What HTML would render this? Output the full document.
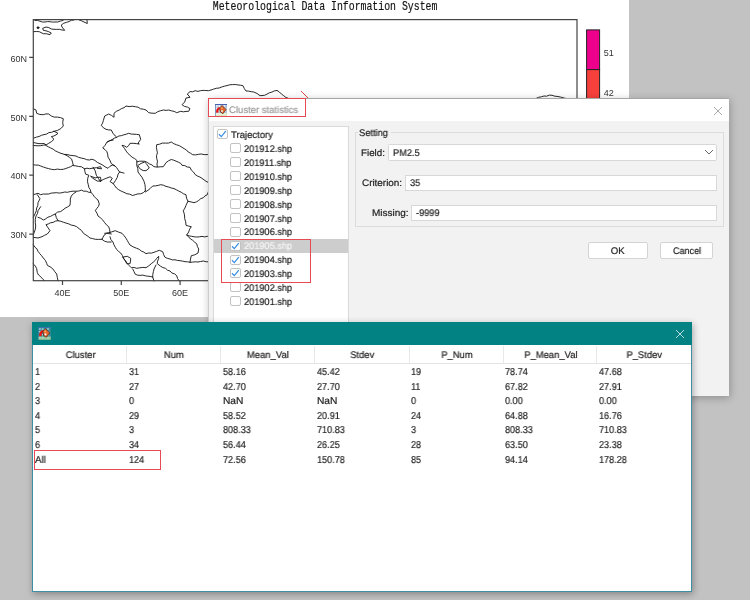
<!DOCTYPE html>
<html><head><meta charset="utf-8">
<style>
*{margin:0;padding:0;box-sizing:border-box}
html,body{width:750px;height:600px;overflow:hidden;background:#c2c2c2;font-family:"Liberation Sans",sans-serif}
.abs{position:absolute}
#mapwin{position:absolute;left:0;top:0;width:629px;height:317px;background:#fff;overflow:hidden}
.t{position:absolute;white-space:nowrap;line-height:1;will-change:transform;text-rendering:geometricPrecision;-webkit-text-stroke:0.2px currentColor}
</style></head><body>
<div id="mapwin">
<svg width="629" height="318" style="position:absolute;left:0;top:0;will-change:transform">
<g fill="none" stroke="#111" stroke-width="0.9" stroke-linejoin="round" stroke-linecap="round">
<path d="M33.3,31.7 L36.3,31.5 L39.3,31.7 L43.3,33.7 L46.7,33.8 L50.0,34.7 L51.3,33.0 L48.7,31.7 L46.0,30.8 L43.3,30.3 L42.7,28.3 L46.0,27.0 L48.8,27.6 L51.3,29.0 L54.0,29.3 L56.7,29.4 L59.4,29.3 L62.0,30.0 L64.7,30.3 L62.0,27.0 L61.3,25.0 L63.8,23.2 L66.7,22.3 L69.1,21.5 L71.4,20.3 L74.0,20.0"/>
<path d="M35.0,20.5 L37.6,20.4 L40.0,21.2 L42.4,22.0 L45.0,22.0 L47.5,21.6 L50.0,21.7 L52.5,22.1 L55.0,22.0 L57.8,22.0 L60.3,21.1 L63.0,20.5"/>
<path d="M79.3,20.0 L81.7,20.9 L84.0,22.0 L87.3,23.5 L87.0,20.0"/>
<path d="M33.3,108.7 L36.0,110.0 L36.7,113.3 L39.9,114.5 L43.3,114.7 L45.9,113.9 L48.7,114.0 L51.3,116.0 L54.2,117.1 L57.4,117.1 L60.4,117.6 L63.3,118.7 L62.7,122.7 L63.3,126.0 L60.7,128.7 L57.5,130.4 L54.0,131.3 L51.6,132.3 L48.9,132.6 L46.6,134.1 L44.0,134.6 L41.5,135.3 L39.0,136.5 L36.5,137.1 L34.0,138.0"/>
<path d="M54.0,131.3 L58.0,133.3 L56.0,134.9 L53.8,136.0 L51.3,136.7 L54.0,139.3 L51.5,141.6 L48.7,143.3 L46.0,145.0"/>
<path d="M33.3,142.5 L38.0,143.5 L41.0,143.7 L44.0,143.5 L46.0,144.8 L43.3,145.2 L40.7,145.7 L38.0,145.8 L33.3,145.5"/>
<path d="M46.0,145.5 L48.3,146.8 L50.7,148.0 L53.1,149.1 L55.2,150.8 L57.6,151.9 L60.0,153.0 L64.3,154.4 L67.3,154.5 L70.1,155.3 L73.1,155.6 L76.0,156.0 L78.5,157.3 L81.3,158.1 L84.1,158.6 L86.7,159.7 L89.4,160.0 L92.0,159.2 L94.9,160.4 L97.3,162.4 L100.0,163.7 L102.7,165.1 L105.2,166.9 L108.0,168.3 L109.9,166.4 L112.3,165.1 L114.4,165.6"/>
<path d="M33.3,164.7 L35.8,165.1 L38.3,165.1 L40.7,166.0 L43.3,167.0 L45.9,167.9 L48.6,168.6 L51.3,169.3 L54.3,169.7 L57.3,169.1 L60.3,169.5 L63.3,169.3 L65.8,168.5 L68.3,167.6 L70.7,166.7 L73.3,165.1 L72.5,162.2 L71.7,159.2 L69.4,157.3 L67.0,155.6 L64.3,154.4"/>
<path d="M73.3,165.6 L76.0,165.9 L78.6,166.5 L81.3,166.7 L84.5,168.8 L87.0,168.2 L89.5,168.7 L92.0,168.3 L96.3,167.7 L100.5,166.7 L101.6,168.8 L97.3,168.3"/>
<path d="M84.5,168.8 L84.9,171.5 L85.6,174.1 L88.8,175.2 L87.7,178.4 L87.5,181.7 L88.3,184.8 L88.8,187.4 L90.3,189.7 L90.9,192.3 L92.8,194.4 L94.4,196.7 L96.3,198.7 L98.0,200.0 L99.3,204.0 L98.4,206.5 L96.7,208.5 L95.3,210.7 L97.0,213.2 L98.0,216.0 L100.5,217.9 L102.8,220.1 L104.7,222.7 L106.5,224.9 L108.7,226.7 L109.7,229.8 L110.0,233.0"/>
<path d="M93.1,167.2 L95.2,170.9 L96.3,175.2 L98.4,178.4 L100.5,181.6"/>
<path d="M90.9,176.3 L95.2,177.9 L97.8,177.3 L100.5,177.3 L101.1,181.1 L97.3,181.1 L93.1,178.4 Z"/>
<path d="M100.5,181.1 L103.1,179.6 L105.9,178.4 L110.1,176.8 L112.3,178.4 L110.1,181.6 L113.3,183.7 L115.5,180.5 L117.2,177.5 L118.1,174.1 L119.7,172.0"/>
<path d="M114.4,165.6 L116.5,167.4 L118.0,169.8 L119.7,172.0 L124.0,173.1"/>
<path d="M113.3,183.7 L114.9,185.9 L116.5,188.0 L118.8,189.8 L121.3,191.2 L124.0,192.3 L126.7,193.7 L129.8,194.2 L132.5,195.5 L135.2,194.7 L137.9,193.9 L140.7,193.8 L143.3,192.7 L145.3,190.7"/>
<path d="M113.3,140.0 L109.9,140.6 L106.9,142.1 L105.1,145.3 L102.7,148.0 L105.0,149.6 L106.9,151.7 L107.7,154.3 L108.0,157.1 L109.9,160.2 L111.2,163.5 L114.4,165.6"/>
<path d="M107.3,142.0 L109.6,140.8 L112.0,139.7 L114.2,138.2 L116.7,137.3 L118.9,136.0 L121.5,135.6 L123.9,134.8 L126.3,134.2 L128.7,133.3 L131.3,134.1 L134.0,134.2 L136.6,134.4 L139.3,134.7 L140.7,139.3 L138.0,143.3 L139.3,144.0 L136.2,143.6 L133.1,143.3 L130.0,143.3 L128.7,145.6 L126.7,147.3 L124.5,145.9 L122.0,145.3 L124.7,148.7 L126.2,151.1 L127.9,153.4 L130.0,155.3 L132.1,157.2 L134.6,158.5 L136.8,160.3 L136.9,162.8 L136.7,165.3 L137.8,168.6 L138.0,172.0 L139.9,174.7 L142.0,177.3 L144.0,181.3 L144.9,184.4 L145.3,187.5 L145.3,190.7"/>
<path d="M138.0,165.3 L141.2,163.4 L144.7,162.0 L146.5,163.8 L147.9,165.9 L149.3,168.0 L146.0,170.7 L143.2,170.5 L140.7,169.3 Z"/>
<path d="M136.8,162.0 L139.4,161.2 L142.0,161.2 L144.7,161.3 L147.2,162.3 L149.4,163.9 L151.9,164.9 L154.0,166.7 L157.1,167.1 L160.2,166.8 L163.3,166.7 L166.0,162.7 L168.5,160.8 L171.3,159.5 L173.8,160.2 L176.1,161.2 L178.4,162.2 L180.7,163.3 L182.0,165.3 L184.8,165.6 L187.2,167.0 L190.0,167.3 L191.3,170.1 L193.6,172.2 L195.3,174.7 L197.4,176.0 L199.8,177.0 L201.9,178.3 L204.0,179.8 L206.0,181.3 L210.0,183.3"/>
<path d="M157.3,166.7 L157.0,164.0 L157.5,161.2 L156.7,158.5 L156.5,155.7 L157.4,152.9 L156.9,150.2 L156.4,147.5 L156.7,144.7 L159.6,144.2 L162.4,143.1 L165.5,143.1 L168.5,143.1 L171.3,142.0 L173.8,143.7 L176.6,144.8 L179.4,145.7 L182.0,147.3 L184.2,148.7 L186.5,150.0 L188.2,152.0 L190.5,153.2 L192.7,154.7 L195.6,154.9 L198.5,154.3 L201.3,154.0 L204.2,154.6 L207.1,154.6 L210.0,154.0"/>
<path d="M145.3,192.0 L148.0,190.3 L150.4,188.3 L152.7,186.0 L155.4,185.9 L158.1,185.4 L160.7,184.7 L163.4,185.2 L166.0,186.4 L168.7,187.0 L171.3,188.0 L174.0,188.6 L176.4,189.8 L178.8,191.1 L181.2,192.2 L183.5,193.8 L186.0,194.7 L186.5,198.1 L188.0,201.3 L191.0,201.9 L194.0,202.7 L196.5,201.8 L198.7,200.5 L200.7,198.7 L203.2,197.8 L205.0,195.9 L207.3,194.7 L208.7,190.7"/>
<path d="M188.0,201.3 L186.0,205.3 L184.9,208.1 L183.3,210.7 L184.1,213.3 L184.6,216.0 L184.7,218.7 L185.7,221.9 L186.0,225.3 L188.6,226.1 L191.3,226.7 L189.6,229.2 L188.7,232.0 L186.7,235.0 L188.7,237.0 L190.5,239.0 L192.7,240.3 L194.6,242.2 L196.7,243.7 L197.4,246.5 L198.7,249.0 L198.0,253.0 L194.8,254.8 L191.3,255.7 L190.5,259.0 L190.0,262.3"/>
<path d="M186.7,235.0 L189.1,235.9 L191.6,236.3 L194.1,236.8 L196.7,237.0 L199.4,236.8 L202.0,236.4 L204.7,236.9 L207.3,236.3 L210.0,236.3"/>
<path d="M33.3,194.7 L38.0,193.3 L40.7,194.7 L43.3,194.0 L46.0,194.1 L48.7,194.0 L51.3,193.1 L54.0,192.9 L56.7,192.7 L59.4,193.1 L62.1,192.7 L64.8,192.0 L67.5,192.3 L70.3,191.5 L73.1,191.2 L76.0,191.2 L78.7,191.1 L81.3,190.1 L83.7,191.2 L86.4,191.2 L88.8,192.3 L90.9,192.3"/>
<path d="M76.0,192.0 L73.4,193.7 L71.3,196.0 L70.3,199.0 L70.3,202.2 L70.0,205.3 L67.6,206.9 L65.1,208.2 L62.9,210.0 L60.5,211.6 L57.5,212.1 L55.3,214.0 L52.8,215.1 L50.5,216.4 L47.9,217.2 L45.7,218.9 L43.3,220.0 L40.8,218.3 L38.0,217.3"/>
<path d="M55.3,214.0 L56.3,217.5 L58.0,220.7 L60.8,221.3 L63.4,222.2 L66.1,223.1 L68.8,223.9 L71.3,225.1 L74.1,225.6 L76.7,226.7 L79.1,228.7 L81.6,230.5 L83.4,233.3 L86.0,235.0 L88.1,236.4 L90.0,238.0 L92.7,238.6 L95.3,239.3 L98.7,239.4 L102.0,239.3 L104.0,235.3 L106.7,233.3 L111.3,234.0"/>
<path d="M58.0,220.7 L55.5,221.1 L53.2,222.4 L50.7,222.7 L48.4,223.9 L46.0,224.7 L48.0,227.7 L50.0,230.7 L47.3,234.0 L44.6,235.3 L42.0,236.7 L38.0,238.0 L33.3,237.3"/>
<path d="M37.3,194.7 L40.0,198.7 L38.0,202.7 L37.8,205.5 L36.7,208.0 L36.3,210.7 L35.3,213.3 L33.3,217.3"/>
<path d="M40.7,206.7 L38.0,210.7 L37.5,213.5 L36.0,216.0 L35.3,219.3 L35.3,222.7 L35.7,226.0 L35.3,229.3 L34.3,232.2 L33.3,235.0"/>
<path d="M104.7,233.3 L108.0,232.9 L111.3,232.0 L115.3,230.7 L118.6,232.1 L122.0,233.3 L124.1,235.7 L126.0,238.3 L127.3,240.5 L128.6,242.8 L130.0,245.0 L133.2,246.9 L136.7,248.3 L139.2,249.3 L141.3,251.1 L143.8,252.1 L146.0,253.7 L148.6,253.0 L151.4,253.1 L154.0,252.3 L156.7,251.3 L159.3,250.3 L162.7,251.7 L163.6,254.4 L164.7,257.0 L167.2,258.3 L170.0,259.0 L172.4,259.9 L175.0,259.8 L177.5,260.4 L180.0,260.7 L182.5,261.1 L185.0,261.7 L187.5,261.8 L190.0,262.3 L192.7,262.1 L195.3,261.8 L198.0,262.0 L200.7,261.5 L203.3,261.0 L206.6,261.8 L210.0,261.7"/>
<path d="M110.0,236.7 L110.9,239.6 L112.9,241.9 L113.9,244.7 L115.3,247.3 L116.7,249.5 L118.6,251.4 L120.7,253.0 L122.4,255.5 L123.3,258.3 L125.6,260.8 L127.3,263.7 L129.3,265.7 L131.3,267.7 L134.1,267.5 L136.7,268.3 L139.8,267.8 L142.9,267.4 L146.0,267.7 L148.8,265.8 L151.3,263.7 L153.3,262.1 L155.2,260.4 L156.7,258.3 L158.7,256.3 L158.6,258.8 L157.5,261.2 L157.3,263.7 L160.7,266.3 L162.9,267.6 L165.5,268.3 L167.5,270.2 L170.0,271.0 L171.9,273.0 L174.6,273.9 L176.7,275.7 L177.6,278.6 L179.3,281.0"/>
<path d="M123.3,257.0 L127.3,256.3 L130.7,258.3 L130.5,261.0 L130.0,263.7 L127.3,263.7 Z"/>
<path d="M132.7,269.0 L134.0,271.6 L135.3,274.3 L137.7,275.2 L140.2,275.4 L142.8,275.1 L145.3,275.8 L147.7,276.2 L150.2,276.4 L152.7,277.0 L154.0,281.0"/>
<path d="M152.7,277.0 L152.8,274.3 L153.4,271.6 L154.0,269.0 L156.0,265.0"/>
<path d="M33.3,244.7 L34.7,247.0 L36.9,248.8 L38.0,251.3 L39.7,253.6 L41.6,255.7 L43.3,258.0 L45.4,260.4 L46.7,263.3 L47.3,265.3 L50.1,266.8 L52.7,268.7 L54.6,271.4 L56.7,274.0 L57.3,277.4 L58.0,280.7"/>
<path d="M33.3,264.0 L35.4,266.1 L36.7,268.7 L37.3,272.7 L38.6,275.0 L40.7,276.7 L42.5,278.9 L44.7,280.7"/>
<path d="M102.0,239.3 L104.4,241.1 L107.3,242.0 L111.3,242.0"/>
<path d="M116.7,137.3 L115.3,136.0 L112.9,133.2 L111.3,130.0 L108.6,129.9 L106.0,129.3 L103.3,127.7 L101.3,125.3 L102.6,123.1 L103.3,120.7 L104.7,116.0 L108.7,114.0 L111.5,115.4 L114.0,117.3 L114.0,113.3 L116.4,111.3 L119.3,110.0 L121.5,108.6 L124.0,107.7 L126.0,106.0 L129.1,106.6 L132.2,106.2 L135.3,106.7 L138.1,107.2 L140.5,108.8 L143.3,109.2 L146.0,110.0 L148.7,112.7 L152.0,113.2 L155.3,113.3 L157.8,111.6 L160.7,110.7 L163.3,110.0 L166.1,110.4 L168.7,110.0 L171.4,110.8 L174.2,111.4 L176.7,112.7 L180.7,111.3 L183.4,111.8 L186.0,111.4 L188.7,111.3 L190.0,108.7 L187.5,107.1 L184.5,106.4 L182.0,104.7 L184.7,102.0 L186.0,98.0 L190.0,97.3 L187.3,94.0 L190.0,91.6 L192.7,91.8 L195.2,90.7 L197.9,91.4 L200.5,90.7 L203.1,90.4 L205.8,90.5 L208.4,90.7 L211.0,90.0 L213.6,89.1 L216.3,88.3 L219.1,88.0 L221.7,87.0 L224.3,86.2 L227.0,85.6 L229.7,84.8 L232.5,84.6 L235.2,84.5 L237.8,84.9 L240.4,85.2 L243.0,85.7 L244.3,88.5 L246.0,91.0 L248.6,91.1 L251.2,91.7 L253.8,92.0 L257.1,93.5 L260.0,95.7 L264.5,95.3 L266.9,94.2 L269.3,92.8 L271.9,92.1 L274.3,90.9 L277.0,90.4 L279.4,92.0 L281.4,94.0 L283.6,95.6 L285.8,97.4 L290.0,99.0"/>
<path d="M536.0,98.5 L538.6,97.3 L541.3,96.8 L544.0,96.0 L546.7,96.2 L549.3,95.1 L552.0,95.3 L554.9,96.2 L558.0,96.5 L560.7,97.1 L563.3,97.8 L565.9,98.5"/>
<circle cx="38" cy="27.7" r="0.9" fill="#111"/>
</g>
<path d="M301,91 L308,98" stroke="#e04848" stroke-width="1" fill="none"/>
<g stroke="#444" stroke-width="1.2" fill="none">
<rect x="33.3" y="19.6" width="543.7" height="261.1"/>
<path d="M29.2,57.4 H33.3 M29.2,116.3 H33.3 M29.2,175.2 H33.3 M29.2,234.1 H33.3 M62.5,280.7 V285 M121.3,280.7 V285 M180.1,280.7 V285"/>
</g>
<rect x="586.6" y="29.9" width="13" height="39.7" fill="#ec008c" stroke="#222" stroke-width="1"/>
<rect x="586.6" y="69.6" width="13" height="40" fill="#f6403c" stroke="#222" stroke-width="1"/>
<g font-family="Liberation Sans" font-size="9" fill="#333">
<text x="27" y="61.6" text-anchor="end">60N</text>
<text x="27" y="120.5" text-anchor="end">50N</text>
<text x="27" y="179.4" text-anchor="end">40N</text>
<text x="27" y="238.3" text-anchor="end">30N</text>
<text x="62.5" y="296" text-anchor="middle">40E</text>
<text x="121.3" y="296" text-anchor="middle">50E</text>
<text x="180.1" y="296" text-anchor="middle">60E</text>
<text x="603.7" y="56">51</text>
<text x="603.7" y="96.3">42</text>
</g>
<text transform="translate(212.8,9.8) scale(0.896,1.18)" font-family="Liberation Mono" font-size="11" fill="#111" stroke="#111" stroke-width="0.15">Meteorological Data Information System</text>
</svg>

</div>
<div class="abs" style="left:208.00px;top:98.00px;width:521.00px;height:298.00px;background:#f2f2f2;box-shadow:1px 2px 8px rgba(0,0,0,0.26);"></div>
<div class="abs" style="left:208.00px;top:98.00px;width:1.00px;height:298.00px;background:#cdcdcd"></div>
<div class="abs" style="left:208.00px;top:98.00px;width:521.00px;height:1.00px;background:#a6a6a6"></div>
<div class="abs" style="left:209.00px;top:99.00px;width:520.00px;height:22.00px;background:#fff"></div>
<svg class="abs" style="left:215.00px;top:104.00px" width="12" height="12" viewBox="0 0 12 12"><rect x="0" y="0" width="12" height="12" fill="#b4c2d6"/>
<path d="M0,9H12V12H0Z" fill="#dfe8c0"/>
<g fill="#f4f6fa"><rect x="1" y="1.2" width="1.6" height="1.4"/><rect x="3.6" y="1.2" width="1.6" height="1.4"/><rect x="8.6" y="1.2" width="1.6" height="1.4"/><rect x="1" y="3.8" width="1.6" height="1.4"/><rect x="8.6" y="3.8" width="1.6" height="1.4"/><rect x="1" y="9.4" width="1.6" height="1.4"/><rect x="3.6" y="9.4" width="1.6" height="1.4"/><rect x="6.2" y="9.4" width="1.6" height="1.4"/><rect x="8.6" y="9.4" width="1.6" height="1.4"/><rect x="3.6" y="6.6" width="1.6" height="1.4"/><rect x="8.6" y="6.6" width="1.6" height="1.4"/></g>
<path d="M0,0.4H12" stroke="#2a48a8" stroke-width="0.9"/>
<path d="M0.4,0V12" stroke="#4a68b0" stroke-width="0.6"/>
<path d="M4.6,3 C2,3.4 0.8,6 1.2,8.8 L3.4,8.4 C3.2,6.4 3.8,5 5,4.4 Z" fill="#f01010"/>
<path d="M4.6,4 L7.2,1.6 L11,5.6 L7.8,9.8 L5.2,7.6 Z" fill="#e8642a" stroke="#5a2a10" stroke-width="0.7" stroke-linejoin="round"/>
<path d="M5.6,3.8 L7.2,2.8 L8,4.8 L6.4,5.6 Z" fill="#f49a50"/>
<circle cx="7" cy="7" r="1" fill="#f0f0f0"/>
<path d="M5,7.4 L6,8.4" stroke="#222" stroke-width="0.8"/></svg>
<div class="t" style="left:229.40px;top:106.00px;font-size:9.60px;color:#9c9c9c;transform:scaleX(0.990);transform-origin:0 0;">Cluster statistics</div>
<svg class="abs" style="left:712.00px;top:105.00px" width="12" height="12" viewBox="0 0 12 12"><path d="M2,2 L10,10 M10,2 L2,10" stroke="#a0a0a0" stroke-width="0.9"/></svg>
<div class="abs" style="left:213.00px;top:126.00px;width:136.00px;height:215.00px;background:#fff;border:1px solid #d9d9d9"></div>
<div class="abs" style="left:214.00px;top:239.40px;width:134.00px;height:13.40px;background:#cdcdcd"></div>
<div class="abs" style="left:217.00px;top:129.30px;width:10.50px;height:10.00px;border:1px solid #c2c2c2;border-radius:2px;background:#fff"></div>
<svg class="abs" style="left:217.00px;top:129.30px" width="11" height="10" viewBox="0 0 11 10"><path d="M2,5.2 L4.3,7.6 L8.8,2.2" stroke="#3b8fe6" stroke-width="1.3" fill="none"/></svg>
<div class="t" style="left:231.00px;top:131.00px;font-size:9.60px;color:#222;transform:scaleX(0.990);transform-origin:0 0;">Trajectory</div>
<div class="abs" style="left:230.20px;top:143.30px;width:10.50px;height:10.00px;border:1px solid #c2c2c2;border-radius:2px;background:#fff"></div>
<div class="t" style="left:243.80px;top:145.00px;font-size:9.60px;color:#222;transform:scaleX(0.960);transform-origin:0 0;">201912.shp</div>
<div class="abs" style="left:230.20px;top:157.20px;width:10.50px;height:10.00px;border:1px solid #c2c2c2;border-radius:2px;background:#fff"></div>
<div class="t" style="left:243.80px;top:158.90px;font-size:9.60px;color:#222;transform:scaleX(0.960);transform-origin:0 0;">201911.shp</div>
<div class="abs" style="left:230.20px;top:171.10px;width:10.50px;height:10.00px;border:1px solid #c2c2c2;border-radius:2px;background:#fff"></div>
<div class="t" style="left:243.80px;top:172.80px;font-size:9.60px;color:#222;transform:scaleX(0.960);transform-origin:0 0;">201910.shp</div>
<div class="abs" style="left:230.20px;top:185.00px;width:10.50px;height:10.00px;border:1px solid #c2c2c2;border-radius:2px;background:#fff"></div>
<div class="t" style="left:243.80px;top:186.70px;font-size:9.60px;color:#222;transform:scaleX(0.960);transform-origin:0 0;">201909.shp</div>
<div class="abs" style="left:230.20px;top:198.90px;width:10.50px;height:10.00px;border:1px solid #c2c2c2;border-radius:2px;background:#fff"></div>
<div class="t" style="left:243.80px;top:200.60px;font-size:9.60px;color:#222;transform:scaleX(0.960);transform-origin:0 0;">201908.shp</div>
<div class="abs" style="left:230.20px;top:212.80px;width:10.50px;height:10.00px;border:1px solid #c2c2c2;border-radius:2px;background:#fff"></div>
<div class="t" style="left:243.80px;top:214.50px;font-size:9.60px;color:#222;transform:scaleX(0.960);transform-origin:0 0;">201907.shp</div>
<div class="abs" style="left:230.20px;top:226.70px;width:10.50px;height:10.00px;border:1px solid #c2c2c2;border-radius:2px;background:#fff"></div>
<div class="t" style="left:243.80px;top:228.40px;font-size:9.60px;color:#222;transform:scaleX(0.960);transform-origin:0 0;">201906.shp</div>
<div class="abs" style="left:230.20px;top:240.60px;width:10.50px;height:10.00px;border:1px solid #c2c2c2;border-radius:2px;background:#fff"></div>
<svg class="abs" style="left:230.20px;top:240.60px" width="11" height="10" viewBox="0 0 11 10"><path d="M2,5.2 L4.3,7.6 L8.8,2.2" stroke="#3b8fe6" stroke-width="1.3" fill="none"/></svg>
<div class="t" style="left:243.80px;top:242.30px;font-size:9.60px;color:#f4f4f4;transform:scaleX(0.960);transform-origin:0 0;">201905.shp</div>
<div class="abs" style="left:230.20px;top:254.50px;width:10.50px;height:10.00px;border:1px solid #c2c2c2;border-radius:2px;background:#fff"></div>
<svg class="abs" style="left:230.20px;top:254.50px" width="11" height="10" viewBox="0 0 11 10"><path d="M2,5.2 L4.3,7.6 L8.8,2.2" stroke="#3b8fe6" stroke-width="1.3" fill="none"/></svg>
<div class="t" style="left:243.80px;top:256.20px;font-size:9.60px;color:#222;transform:scaleX(0.960);transform-origin:0 0;">201904.shp</div>
<div class="abs" style="left:230.20px;top:268.40px;width:10.50px;height:10.00px;border:1px solid #c2c2c2;border-radius:2px;background:#fff"></div>
<svg class="abs" style="left:230.20px;top:268.40px" width="11" height="10" viewBox="0 0 11 10"><path d="M2,5.2 L4.3,7.6 L8.8,2.2" stroke="#3b8fe6" stroke-width="1.3" fill="none"/></svg>
<div class="t" style="left:243.80px;top:270.10px;font-size:9.60px;color:#222;transform:scaleX(0.960);transform-origin:0 0;">201903.shp</div>
<div class="abs" style="left:230.20px;top:282.30px;width:10.50px;height:10.00px;border:1px solid #c2c2c2;border-radius:2px;background:#fff"></div>
<div class="t" style="left:243.80px;top:284.00px;font-size:9.60px;color:#222;transform:scaleX(0.960);transform-origin:0 0;">201902.shp</div>
<div class="abs" style="left:230.20px;top:296.20px;width:10.50px;height:10.00px;border:1px solid #c2c2c2;border-radius:2px;background:#fff"></div>
<div class="t" style="left:243.80px;top:297.90px;font-size:9.60px;color:#222;transform:scaleX(0.960);transform-origin:0 0;">201901.shp</div>
<div class="abs" style="left:355.00px;top:132.00px;width:369.00px;height:95.00px;border:1px solid #dcdcdc"></div>
<div class="abs" style="left:358.00px;top:128.00px;width:33.00px;height:8.00px;background:#f2f2f2"></div>
<div class="t" style="left:358.80px;top:129.00px;font-size:9.60px;color:#222;transform:scaleX(0.970);transform-origin:0 0;">Setting</div>
<div class="t" style="left:361.30px;top:148.60px;font-size:9.60px;color:#222;transform:scaleX(1.020);transform-origin:0 0;">Field:</div>
<div class="abs" style="left:388.00px;top:144.00px;width:328.50px;height:16.50px;background:#fff;border:1px solid #d8d8d8;border-radius:1.5px"></div>
<div class="t" style="left:393.30px;top:148.60px;font-size:9.60px;color:#222;transform:scaleX(0.960);transform-origin:0 0;">PM2.5</div>
<svg class="abs" style="left:704.00px;top:148.00px" width="10" height="8" viewBox="0 0 10 8"><path d="M1,2 L5,6 L9,2" stroke="#555" stroke-width="0.9" fill="none"/></svg>
<div class="t" style="left:361.60px;top:178.90px;font-size:9.60px;color:#222;transform:scaleX(1.030);transform-origin:0 0;">Criterion:</div>
<div class="abs" style="left:405.00px;top:174.50px;width:311.50px;height:16.30px;background:#fff;border:1px solid #d8d8d8"></div>
<div class="t" style="left:410.00px;top:178.90px;font-size:9.60px;color:#222;transform:scaleX(0.960);transform-origin:0 0;">35</div>
<div class="t" style="left:371.50px;top:208.70px;font-size:9.60px;color:#222;transform:scaleX(1.040);transform-origin:0 0;">Missing:</div>
<div class="abs" style="left:411.00px;top:204.50px;width:305.50px;height:16.30px;background:#fff;border:1px solid #d8d8d8"></div>
<div class="t" style="left:416.20px;top:208.70px;font-size:9.60px;color:#222;transform:scaleX(0.960);transform-origin:0 0;">-9999</div>
<div class="abs" style="left:588.00px;top:242.40px;width:59.60px;height:17.00px;background:#fff;border:1px solid #d4d4d4;border-radius:2px"></div>
<div class="t" style="left:588.00px;top:247.20px;font-size:9.60px;color:#222;width:59.6px;text-align:center;">OK</div>
<div class="abs" style="left:660.40px;top:242.40px;width:52.60px;height:17.00px;background:#fff;border:1px solid #d4d4d4;border-radius:2px"></div>
<div class="t" style="left:673.20px;top:247.20px;font-size:9.60px;color:#222;transform:scaleX(0.940);transform-origin:0 0;">Cancel</div>
<div class="abs" style="left:208.30px;top:98.30px;width:97.30px;height:18.50px;border:1.4px solid #e64a55"></div>
<div class="abs" style="left:221.00px;top:239.20px;width:89.60px;height:43.40px;border:1.3px solid #e64a55"></div>
<div class="abs" style="left:32.00px;top:322.00px;width:660.00px;height:270.00px;background:#fff;border:1px solid #3f8fa2;box-shadow:1px 2px 7px rgba(0,0,0,0.32)"></div>
<div class="abs" style="left:32.00px;top:322.00px;width:660.00px;height:23.40px;background:#038284"></div>
<svg class="abs" style="left:38.00px;top:327.00px" width="13" height="13" viewBox="0 0 13 13"><g transform="scale(1.06)"><rect x="0" y="0" width="12" height="12" fill="#3e8a9a"/>
<path d="M0,9H12V12H0Z" fill="#9cc890"/>
<g fill="#a8d4d0"><rect x="1" y="1.2" width="1.6" height="1.4"/><rect x="3.6" y="1.2" width="1.6" height="1.4"/><rect x="8.6" y="1.2" width="1.6" height="1.4"/><rect x="1" y="3.8" width="1.6" height="1.4"/><rect x="8.6" y="3.8" width="1.6" height="1.4"/><rect x="1" y="9.4" width="1.6" height="1.4"/><rect x="3.6" y="9.4" width="1.6" height="1.4"/><rect x="6.2" y="9.4" width="1.6" height="1.4"/><rect x="8.6" y="9.4" width="1.6" height="1.4"/><rect x="3.6" y="6.6" width="1.6" height="1.4"/><rect x="8.6" y="6.6" width="1.6" height="1.4"/></g>
<path d="M0,0.4H12" stroke="#3a6cb0" stroke-width="0.9"/>
<path d="M0.4,0V12" stroke="#3a78a0" stroke-width="0.6"/>
<path d="M4.6,3 C2,3.4 0.8,6 1.2,8.8 L3.4,8.4 C3.2,6.4 3.8,5 5,4.4 Z" fill="#f01010"/>
<path d="M4.6,4 L7.2,1.6 L11,5.6 L7.8,9.8 L5.2,7.6 Z" fill="#e8642a" stroke="#5a2a10" stroke-width="0.7" stroke-linejoin="round"/>
<path d="M5.6,3.8 L7.2,2.8 L8,4.8 L6.4,5.6 Z" fill="#f49a50"/>
<circle cx="7" cy="7" r="1" fill="#f0f0f0"/>
<path d="M5,7.4 L6,8.4" stroke="#222" stroke-width="0.8"/></g></svg>
<svg class="abs" style="left:674.00px;top:328.00px" width="12" height="12" viewBox="0 0 12 12"><path d="M2,2 L10,10 M10,2 L2,10" stroke="#cfe6e6" stroke-width="0.9"/></svg>
<div class="abs" style="left:33.00px;top:363.00px;width:658.00px;height:1.00px;background:#e4e4e4"></div>
<div class="abs" style="left:126.40px;top:345.50px;width:1.00px;height:17.50px;background:#e8e8e8"></div>
<div class="abs" style="left:220.40px;top:345.50px;width:1.00px;height:17.50px;background:#e8e8e8"></div>
<div class="abs" style="left:314.20px;top:345.50px;width:1.00px;height:17.50px;background:#e8e8e8"></div>
<div class="abs" style="left:408.60px;top:345.50px;width:1.00px;height:17.50px;background:#e8e8e8"></div>
<div class="abs" style="left:502.60px;top:345.50px;width:1.00px;height:17.50px;background:#e8e8e8"></div>
<div class="abs" style="left:596.40px;top:345.50px;width:1.00px;height:17.50px;background:#e8e8e8"></div>
<div class="t" style="left:34.00px;top:351.40px;font-size:9.60px;color:#222;transform:scaleX(0.985);transform-origin:0 0;width:94.82px;text-align:center;">Cluster</div>
<div class="t" style="left:127.40px;top:351.40px;font-size:9.60px;color:#222;transform:scaleX(0.985);transform-origin:0 0;width:95.43px;text-align:center;">Num</div>
<div class="t" style="left:221.40px;top:351.40px;font-size:9.60px;color:#222;transform:scaleX(0.985);transform-origin:0 0;width:95.23px;text-align:center;">Mean_Val</div>
<div class="t" style="left:315.20px;top:351.40px;font-size:9.60px;color:#222;transform:scaleX(0.985);transform-origin:0 0;width:95.84px;text-align:center;">Stdev</div>
<div class="t" style="left:409.60px;top:351.40px;font-size:9.60px;color:#222;transform:scaleX(0.985);transform-origin:0 0;width:95.43px;text-align:center;">P_Num</div>
<div class="t" style="left:503.60px;top:351.40px;font-size:9.60px;color:#222;transform:scaleX(0.985);transform-origin:0 0;width:95.23px;text-align:center;">P_Mean_Val</div>
<div class="t" style="left:597.40px;top:351.40px;font-size:9.60px;color:#222;transform:scaleX(0.985);transform-origin:0 0;width:96.04px;text-align:center;">P_Stdev</div>
<div class="t" style="left:35.40px;top:367.90px;font-size:10.00px;color:#1e1e1e;transform:scaleX(0.910);transform-origin:0 0;">1</div>
<div class="t" style="left:129.20px;top:367.90px;font-size:10.00px;color:#1e1e1e;transform:scaleX(0.910);transform-origin:0 0;">31</div>
<div class="t" style="left:223.20px;top:367.90px;font-size:10.00px;color:#1e1e1e;transform:scaleX(0.910);transform-origin:0 0;">58.16</div>
<div class="t" style="left:317.00px;top:367.90px;font-size:10.00px;color:#1e1e1e;transform:scaleX(0.910);transform-origin:0 0;">45.42</div>
<div class="t" style="left:411.40px;top:367.90px;font-size:10.00px;color:#1e1e1e;transform:scaleX(0.910);transform-origin:0 0;">19</div>
<div class="t" style="left:505.40px;top:367.90px;font-size:10.00px;color:#1e1e1e;transform:scaleX(0.910);transform-origin:0 0;">78.74</div>
<div class="t" style="left:599.20px;top:367.90px;font-size:10.00px;color:#1e1e1e;transform:scaleX(0.910);transform-origin:0 0;">47.68</div>
<div class="t" style="left:35.40px;top:382.53px;font-size:10.00px;color:#1e1e1e;transform:scaleX(0.910);transform-origin:0 0;">2</div>
<div class="t" style="left:129.20px;top:382.53px;font-size:10.00px;color:#1e1e1e;transform:scaleX(0.910);transform-origin:0 0;">27</div>
<div class="t" style="left:223.20px;top:382.53px;font-size:10.00px;color:#1e1e1e;transform:scaleX(0.910);transform-origin:0 0;">42.70</div>
<div class="t" style="left:317.00px;top:382.53px;font-size:10.00px;color:#1e1e1e;transform:scaleX(0.910);transform-origin:0 0;">27.70</div>
<div class="t" style="left:411.40px;top:382.53px;font-size:10.00px;color:#1e1e1e;transform:scaleX(0.910);transform-origin:0 0;">11</div>
<div class="t" style="left:505.40px;top:382.53px;font-size:10.00px;color:#1e1e1e;transform:scaleX(0.910);transform-origin:0 0;">67.82</div>
<div class="t" style="left:599.20px;top:382.53px;font-size:10.00px;color:#1e1e1e;transform:scaleX(0.910);transform-origin:0 0;">27.91</div>
<div class="t" style="left:35.40px;top:397.16px;font-size:10.00px;color:#1e1e1e;transform:scaleX(0.910);transform-origin:0 0;">3</div>
<div class="t" style="left:129.20px;top:397.16px;font-size:10.00px;color:#1e1e1e;transform:scaleX(0.910);transform-origin:0 0;">0</div>
<div class="t" style="left:223.20px;top:397.16px;font-size:10.00px;color:#1e1e1e;transform:scaleX(1.020);transform-origin:0 0;">NaN</div>
<div class="t" style="left:317.00px;top:397.16px;font-size:10.00px;color:#1e1e1e;transform:scaleX(1.020);transform-origin:0 0;">NaN</div>
<div class="t" style="left:411.40px;top:397.16px;font-size:10.00px;color:#1e1e1e;transform:scaleX(0.910);transform-origin:0 0;">0</div>
<div class="t" style="left:505.40px;top:397.16px;font-size:10.00px;color:#1e1e1e;transform:scaleX(0.910);transform-origin:0 0;">0.00</div>
<div class="t" style="left:599.20px;top:397.16px;font-size:10.00px;color:#1e1e1e;transform:scaleX(0.910);transform-origin:0 0;">0.00</div>
<div class="t" style="left:35.40px;top:411.79px;font-size:10.00px;color:#1e1e1e;transform:scaleX(0.910);transform-origin:0 0;">4</div>
<div class="t" style="left:129.20px;top:411.79px;font-size:10.00px;color:#1e1e1e;transform:scaleX(0.910);transform-origin:0 0;">29</div>
<div class="t" style="left:223.20px;top:411.79px;font-size:10.00px;color:#1e1e1e;transform:scaleX(0.910);transform-origin:0 0;">58.52</div>
<div class="t" style="left:317.00px;top:411.79px;font-size:10.00px;color:#1e1e1e;transform:scaleX(0.910);transform-origin:0 0;">20.91</div>
<div class="t" style="left:411.40px;top:411.79px;font-size:10.00px;color:#1e1e1e;transform:scaleX(0.910);transform-origin:0 0;">24</div>
<div class="t" style="left:505.40px;top:411.79px;font-size:10.00px;color:#1e1e1e;transform:scaleX(0.910);transform-origin:0 0;">64.88</div>
<div class="t" style="left:599.20px;top:411.79px;font-size:10.00px;color:#1e1e1e;transform:scaleX(0.910);transform-origin:0 0;">16.76</div>
<div class="t" style="left:35.40px;top:426.42px;font-size:10.00px;color:#1e1e1e;transform:scaleX(0.910);transform-origin:0 0;">5</div>
<div class="t" style="left:129.20px;top:426.42px;font-size:10.00px;color:#1e1e1e;transform:scaleX(0.910);transform-origin:0 0;">3</div>
<div class="t" style="left:223.20px;top:426.42px;font-size:10.00px;color:#1e1e1e;transform:scaleX(0.910);transform-origin:0 0;">808.33</div>
<div class="t" style="left:317.00px;top:426.42px;font-size:10.00px;color:#1e1e1e;transform:scaleX(0.910);transform-origin:0 0;">710.83</div>
<div class="t" style="left:411.40px;top:426.42px;font-size:10.00px;color:#1e1e1e;transform:scaleX(0.910);transform-origin:0 0;">3</div>
<div class="t" style="left:505.40px;top:426.42px;font-size:10.00px;color:#1e1e1e;transform:scaleX(0.910);transform-origin:0 0;">808.33</div>
<div class="t" style="left:599.20px;top:426.42px;font-size:10.00px;color:#1e1e1e;transform:scaleX(0.910);transform-origin:0 0;">710.83</div>
<div class="t" style="left:35.40px;top:441.05px;font-size:10.00px;color:#1e1e1e;transform:scaleX(0.910);transform-origin:0 0;">6</div>
<div class="t" style="left:129.20px;top:441.05px;font-size:10.00px;color:#1e1e1e;transform:scaleX(0.910);transform-origin:0 0;">34</div>
<div class="t" style="left:223.20px;top:441.05px;font-size:10.00px;color:#1e1e1e;transform:scaleX(0.910);transform-origin:0 0;">56.44</div>
<div class="t" style="left:317.00px;top:441.05px;font-size:10.00px;color:#1e1e1e;transform:scaleX(0.910);transform-origin:0 0;">26.25</div>
<div class="t" style="left:411.40px;top:441.05px;font-size:10.00px;color:#1e1e1e;transform:scaleX(0.910);transform-origin:0 0;">28</div>
<div class="t" style="left:505.40px;top:441.05px;font-size:10.00px;color:#1e1e1e;transform:scaleX(0.910);transform-origin:0 0;">63.50</div>
<div class="t" style="left:599.20px;top:441.05px;font-size:10.00px;color:#1e1e1e;transform:scaleX(0.910);transform-origin:0 0;">23.38</div>
<div class="t" style="left:35.40px;top:455.68px;font-size:10.00px;color:#1e1e1e;transform:scaleX(0.960);transform-origin:0 0;">All</div>
<div class="t" style="left:129.20px;top:455.68px;font-size:10.00px;color:#1e1e1e;transform:scaleX(0.910);transform-origin:0 0;">124</div>
<div class="t" style="left:223.20px;top:455.68px;font-size:10.00px;color:#1e1e1e;transform:scaleX(0.910);transform-origin:0 0;">72.56</div>
<div class="t" style="left:317.00px;top:455.68px;font-size:10.00px;color:#1e1e1e;transform:scaleX(0.910);transform-origin:0 0;">150.78</div>
<div class="t" style="left:411.40px;top:455.68px;font-size:10.00px;color:#1e1e1e;transform:scaleX(0.910);transform-origin:0 0;">85</div>
<div class="t" style="left:505.40px;top:455.68px;font-size:10.00px;color:#1e1e1e;transform:scaleX(0.910);transform-origin:0 0;">94.14</div>
<div class="t" style="left:599.20px;top:455.68px;font-size:10.00px;color:#1e1e1e;transform:scaleX(0.910);transform-origin:0 0;">178.28</div>
<div class="abs" style="left:34.30px;top:450.40px;width:126.70px;height:20.00px;border:1.3px solid #e64a55"></div>
</body></html>
